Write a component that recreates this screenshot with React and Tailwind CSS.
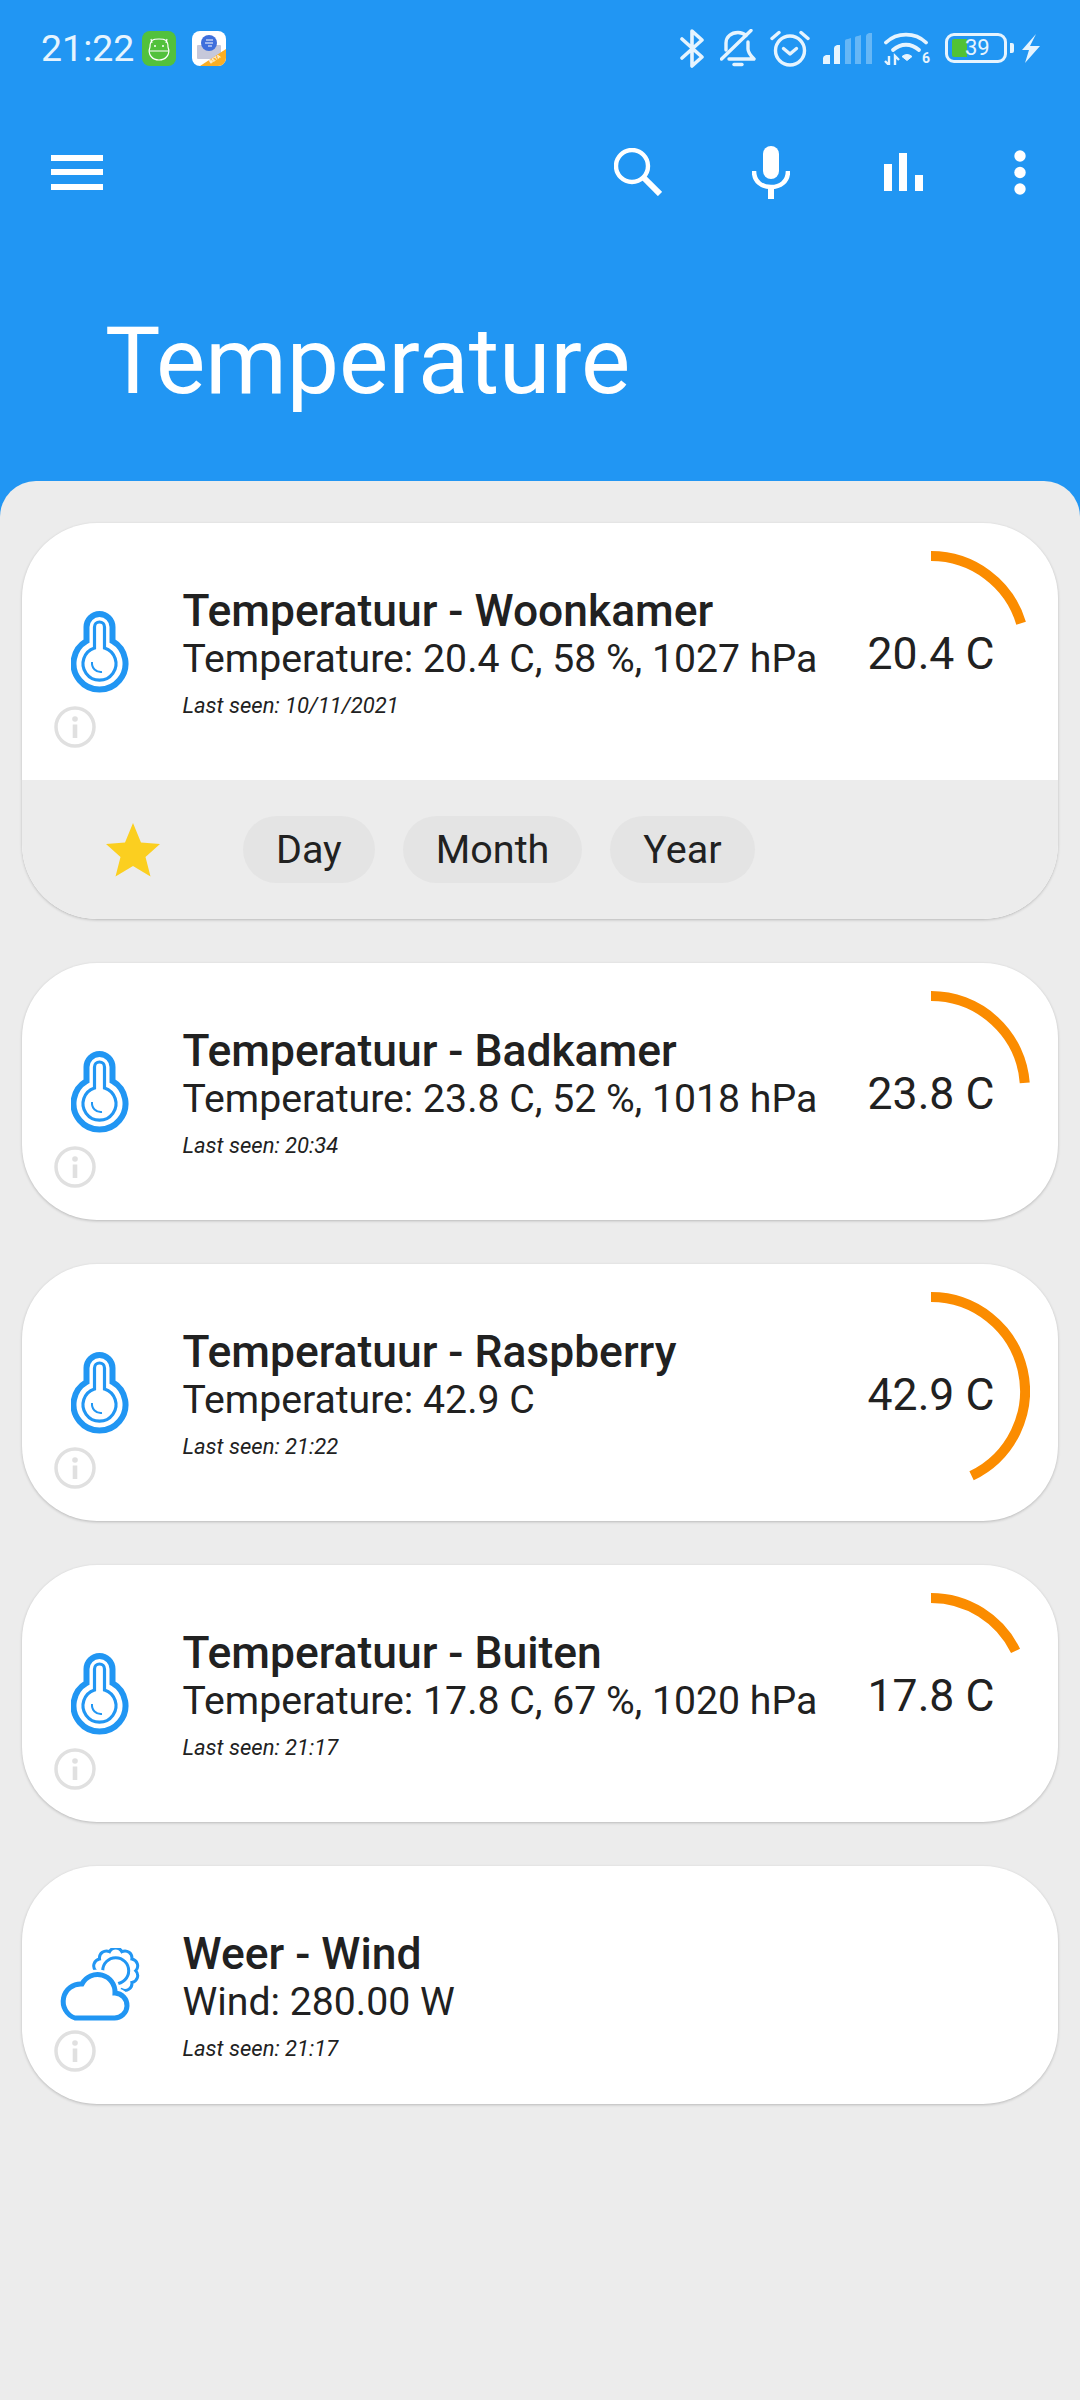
import { Fragment } from 'react';

const sensors = [
  { title: 'Temperatuur - Woonkamer', detail: 'Temperature: 20.4 C, 58 %, 1027 hPa', seen: 'Last seen: 10/11/2021', value: 20.4, expanded: true },
  { title: 'Temperatuur - Badkamer', detail: 'Temperature: 23.8 C, 52 %, 1018 hPa', seen: 'Last seen: 20:34', value: 23.8 },
  { title: 'Temperatuur - Raspberry', detail: 'Temperature: 42.9 C', seen: 'Last seen: 21:22', value: 42.9 },
  { title: 'Temperatuur - Buiten', detail: 'Temperature: 17.8 C, 67 %, 1020 hPa', seen: 'Last seen: 21:17', value: 17.8 },
  { title: 'Weer - Wind', detail: 'Wind: 280.00 W', seen: 'Last seen: 21:17', weather: true },
];

const sunPath = () => {
  const n = 10;
  let d = '';
  for (let i = 0; i <= n; i++) {
    const a = (i / n) * Math.PI * 2;
    const x = (57.7 + 20 * Math.cos(a)).toFixed(2);
    const y = (22.7 + 20 * Math.sin(a)).toFixed(2);
    d += i === 0 ? `M${x} ${y}` : ` A7 7 0 0 1 ${x} ${y}`;
  }
  return d + 'Z';
};

const Thermometer = () => (
  <svg width="58" height="82" viewBox="0 0 58 82" fill="none" stroke="#2196f3">
    <path d="M15.5 30V16A13 13 0 0 1 41.5 16V30A26 26 0 1 1 15.5 30Z" strokeWidth="6" />
    <path d="M23.5 37V16A5 5 0 0 1 33.5 16V37A16.5 16.5 0 1 1 23.5 37Z" strokeWidth="3.2" />
    <path d="M21 51A9 9 0 0 0 31 61" strokeWidth="2" />
  </svg>
);

const WeatherIcon = () => {
  const cloud = 'M17 70H56A12.5 12.5 0 0 0 57 45A17.5 17.5 0 0 0 24 36A17.5 17.5 0 0 0 17 70Z';
  return (
    <svg width="84" height="74" viewBox="0 0 84 74" fill="none" stroke="#2196f3">
      <path d={sunPath()} strokeWidth="3" />
      <circle cx="57.7" cy="22.7" r="13" strokeWidth="3" />
      <path d={cloud} fill="#fff" stroke="#fff" strokeWidth="10" />
      <path d={cloud} fill="#fff" strokeWidth="5" />
    </svg>
  );
};

const InfoIcon = () => (
  <svg width="42" height="42" viewBox="0 0 42 42" fill="none">
    <circle cx="21" cy="21" r="19" stroke="#e0e0e0" strokeWidth="3.5" />
    <circle cx="21" cy="13" r="2.8" fill="#e0e0e0" />
    <rect x="18.7" y="18.5" width="4.6" height="13.5" fill="#e0e0e0" />
  </svg>
);

const Gauge = ({ value }) => {
  // the arc is value as a percentage of the full circle
  const angle = (value * 3.6 * Math.PI) / 180;
  const x = 99 + 94 * Math.sin(angle);
  const y = 99 - 94 * Math.cos(angle);
  const large = value * 3.6 > 180 ? 1 : 0;
  return (
    <div className="relative mt-[28px] mb-[31px] mr-[28px] w-[198px] h-[198px] shrink-0 flex items-center justify-center pt-[8px]">
      <svg className="absolute inset-0" width="198" height="198" viewBox="0 0 198 198" fill="none">
        <path d={`M99 5A94 94 0 ${large} 1 ${x.toFixed(2)} ${y.toFixed(2)}`} stroke="#fb8c00" strokeWidth="10" />
      </svg>
      <span className="text-[44.5px] leading-[52px] text-[#212121] whitespace-nowrap">{value} C</span>
    </div>
  );
};

const SensorCard = ({ title, detail, seen, value, expanded, weather }) => (
  <div className="rounded-[75px] bg-white overflow-hidden shadow-[0_1px_3px_rgba(0,0,0,0.22)]">
    <div className="relative flex">
      <div className="w-[156px] mr-[4.5px] shrink-0 flex items-center justify-center">
        {weather ? <WeatherIcon /> : <Thermometer />}
      </div>
      <div className="flex-1 min-w-0 pt-[65px] pb-[40px] text-[#212121] whitespace-nowrap">
        <p className="text-[44.4px] leading-[47px] font-medium">{title}</p>
        <p className="text-[39.2px] leading-[48px]">{detail}</p>
        <p className="mt-[8px] text-[22px] leading-[30px] italic">{seen}</p>
      </div>
      {value !== undefined && <Gauge value={value} />}
      <div className="absolute left-[32px] bottom-[32px]">
        <InfoIcon />
      </div>
    </div>
    {expanded && (
      <div className="h-[139px] bg-[#ececec] flex items-center pl-[83px]">
        <svg width="56" height="56" viewBox="0 0 56 56" className="mr-[82px]">
          <path d="M28 1L36 20.5L55 22L40.5 35L45.5 54.5L28 44L10.5 54.5L15.5 35L1 22L20 20.5Z" fill="#fbcf20" />
        </svg>
        <div className="flex gap-[28px]">
          {['Day', 'Month', 'Year'].map(label => (
            <span key={label} className="h-[67px] px-[33px] rounded-full bg-[#e4e4e4] text-[39.5px] leading-[67px] text-[#212121]">
              {label}
            </span>
          ))}
        </div>
      </div>
    )}
  </div>
);

const StatusIcons = () => (
  <div className="flex items-center text-[#e6f4fe]">
    {/* bluetooth */}
    <svg width="25" height="39" viewBox="0 0 25 39" fill="none" stroke="currentColor" strokeWidth="3.6" strokeLinejoin="round" strokeLinecap="round">
      <path d="M2 10L22 28L12 37V2L22 11L2 29" />
    </svg>
    {/* muted bell */}
    <svg width="36" height="38" viewBox="0 0 36 38" fill="none" stroke="currentColor" strokeWidth="3.4" strokeLinecap="round" strokeLinejoin="round" className="ml-[15px]">
      <path d="M1.5 30L31 1.5" />
      <path d="M6 21V14C6 8 11 3.5 18 3.5C21 3.5 24 4.5 26 6.5" />
      <path d="M28 13V20C28 24 31 27 34 30H9" />
      <path d="M14 35.5H22" />
    </svg>
    {/* alarm */}
    <svg width="40" height="37" viewBox="0 0 40 37" fill="none" stroke="currentColor" strokeWidth="3.4" strokeLinecap="round" strokeLinejoin="round" className="ml-[14px]">
      <circle cx="20" cy="20.5" r="14.5" />
      <path d="M13.5 18.5L20 24L26.5 18.5" />
      <path d="M2 8.5L9 2.5" />
      <path d="M38 8.5L31 2.5" />
    </svg>
    {/* signal */}
    <svg width="49" height="31" viewBox="0 0 49 31" className="ml-[13px]" fill="currentColor">
      <path d="M0 31V25Q0 23 3 22L7 22V31Z" />
      <path d="M11 31V15Q11 13 14 12L17 12V31Z" />
      <g opacity="0.35">
        <path d="M22 31V8Q22 6 25 6L28 5V31Z" />
        <path d="M32 31V5Q32 3 35 3L38 2V31Z" />
        <path d="M43 31V3Q43 1 46 0L49 0V31Z" />
      </g>
    </svg>
    {/* wifi */}
    <div className="ml-[12px] relative w-[46px] h-[33px]">
      <svg width="46" height="33" viewBox="0 0 46 33" fill="none" stroke="currentColor">
        <path d="M2 10.5C13 0 31 0 42 10.5" strokeWidth="3.8" strokeLinecap="round" />
        <path d="M9 18C17 11 27 11 35 18" strokeWidth="3.8" strokeLinecap="round" />
        <path d="M18 24.5Q23 20.5 28 24.5L23 28.5Z" fill="currentColor" strokeWidth="1" />
        <path d="M5 24V33M5 33L1 29" strokeWidth="2.4" />
        <path d="M11 33V24L15 28" strokeWidth="2.4" />
      </svg>
      <span className="absolute right-0 bottom-0 text-[14px] leading-[14px] font-bold">6</span>
    </div>
    {/* battery */}
    <div className="ml-[15px] relative w-[62px] h-[30px] rounded-[9px] border-[3px] border-current">
      <div className="absolute left-[4px] top-[3px] w-[15px] h-[18px] bg-[#52c234] rounded-l-[2px]" />
      <span className="absolute left-[17px] top-0 text-[22px] leading-[24px] text-[#e6f4fe]">39</span>
    </div>
    <div className="ml-[3px] w-[4px] h-[10px] rounded-r-[2px] bg-current" />
    {/* charging bolt */}
    <svg width="18" height="29" viewBox="0 0 18 29" className="ml-[8px]" fill="currentColor">
      <path d="M14 0L8 12H18L3 29L7 16H0Z" />
    </svg>
  </div>
);

const Header = () => (
  <header className="h-[481px] bg-[#2196f3]">
    <div className="h-[96px] flex items-center justify-between pl-[41px] pr-[40px]">
      <div className="flex items-center">
        <span className="w-[93px] text-[37.5px] leading-[44px] text-[#e6f4fe]">21:22</span>
        <svg width="34" height="35" viewBox="0 0 34 35" className="ml-[8px]">
          <rect width="34" height="35" rx="8" fill="#52c13c" />
          <g fill="none" stroke="#fff" strokeWidth="1.2">
            <path d="M8 16C8 9 11 8 17 8S26 9 26 16C29 24 23 29 17 29S5 24 8 16Z" />
            <path d="M9 8L10 12M25 8L24 12M7.5 20H26.5" />
          </g>
          <circle cx="13" cy="15" r="1" fill="#fff" />
          <circle cx="21" cy="15" r="1" fill="#fff" />
        </svg>
        <svg width="34" height="35" viewBox="0 0 34 35" className="ml-[16px]">
          <defs>
            <clipPath id="beta-clip">
              <rect width="34" height="35" rx="8" />
            </clipPath>
          </defs>
          <g clipPath="url(#beta-clip)">
            <rect width="34" height="35" fill="#fff" />
            <rect x="5" y="14" width="24" height="14" rx="1" fill="#c6c8da" />
            <circle cx="17" cy="12" r="8" fill="#3f6fdc" />
            <path d="M14 9H21M13 12H21M16 15H20" stroke="#fff" strokeWidth="1" />
            <path d="M34 18V35H8Z" fill="#fbae23" />
            <text x="17" y="31" fontSize="5" fontWeight="700" fill="#fff" transform="rotate(-33 21 29)">BETA</text>
          </g>
        </svg>
      </div>
      <StatusIcons />
    </div>
    <div className="h-[152px] flex items-center pl-[51px]">
      <div className="flex flex-col gap-[8.5px]">
        <div className="w-[52px] h-[6px] bg-white" />
        <div className="w-[52px] h-[6px] bg-white" />
        <div className="w-[52px] h-[6px] bg-white" />
      </div>
      <svg width="48" height="48" viewBox="0 0 48 48" fill="none" stroke="#fff" className="ml-[511px]">
        <circle cx="18" cy="18" r="16" strokeWidth="4.4" />
        <path d="M30 30L46 46" strokeWidth="6" />
      </svg>
      <svg width="38" height="53" viewBox="0 0 38 53" className="ml-[90px]" fill="none">
        <rect x="11" y="0" width="16" height="33" rx="8" fill="#fff" />
        <path d="M2 25C2 36 10 41 19 41S36 36 36 25" stroke="#fff" strokeWidth="4.5" />
        <rect x="16" y="40" width="6" height="13" fill="#fff" />
      </svg>
      <svg width="39" height="38" viewBox="0 0 39 38" className="ml-[94px]" fill="#fff">
        <rect x="0" y="11" width="8" height="27" />
        <rect x="15" y="0" width="8" height="38" />
        <rect x="31" y="22" width="8" height="16" />
      </svg>
      <svg width="12" height="45" viewBox="0 0 12 45" className="ml-[91px]" fill="#fff">
        <circle cx="6" cy="6" r="5.7" />
        <circle cx="6" cy="22.5" r="5.7" />
        <circle cx="6" cy="39" r="5.7" />
      </svg>
    </div>
    <h1 className="pl-[105px] pt-[62px] text-[93px] leading-[104px] text-white">Temperature</h1>
  </header>
);

export default function App() {
  return (
    <div className="min-h-[2400px] bg-[#2196f3] font-[Roboto,sans-serif]">
      <Header />
      <main className="min-h-[1919px] bg-[#ececec] rounded-t-[36px] px-[22px] pt-[42px] flex flex-col gap-[44px]">
        {sensors.map(s => (
          <Fragment key={s.title}>
            <SensorCard {...s} />
          </Fragment>
        ))}
      </main>
    </div>
  );
}
